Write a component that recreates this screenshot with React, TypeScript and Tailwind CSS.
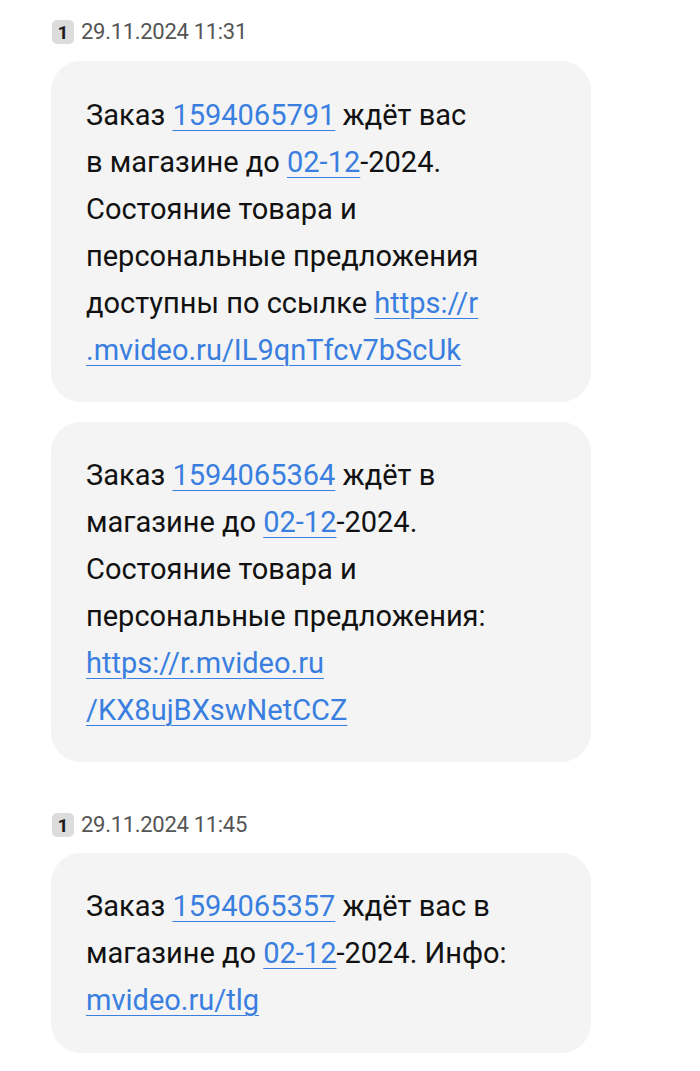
const link = "text-[#3a7fe0] underline decoration-1 underline-offset-[5px]";

function Stamp({ time }: { time: string }) {
  return (
    <div className="flex items-center h-[30px] pl-[52px] gap-[7px]">
      <div className="shrink-0 w-[22px] h-[24px] rounded-[5px] bg-[#dcdcdc] text-[#1a1a1a] text-[19px] font-bold flex items-center justify-center leading-none">
        1
      </div>
      <span className="text-[22px] text-[#555] leading-none tracking-[-0.3px]">{time}</span>
    </div>
  );
}

function L({ children }: { children: React.ReactNode }) {
  return <div className="h-[47px] leading-[47px] whitespace-nowrap">{children}</div>;
}

function Bubble({ children, className }: { children: React.ReactNode; className: string }) {
  return (
    <div className={`ml-[51px] w-[540px] rounded-[30px] bg-[#f4f4f4] pl-[35px] text-[29px] text-[#111] ${className}`}>
      {children}
    </div>
  );
}

export default function App() {
  return (
    <div className="w-[700px] h-[1071px] bg-white pt-[17px] overflow-hidden" style={{ fontFamily: "Roboto, 'Noto Sans', sans-serif" }}>
      <Stamp time="29.11.2024 11:31" />
      <Bubble className="mt-[14px] pt-[31px] pb-[28px]">
        <L>
          Заказ <span className={link}>1594065791</span> ждёт вас
        </L>
        <L>
          в магазине до <span className={link}>02-12</span>-2024.
        </L>
        <L>Состояние товара и</L>
        <L>персональные предложения</L>
        <L>
          доступны по ссылке <span className={link}>https://r</span>
        </L>
        <L>
          <span className={link}>.mvideo.ru/IL9qnTfcv7bScUk</span>
        </L>
      </Bubble>
      <Bubble className="mt-[20px] pt-[30px] pb-[28px]">
        <L>
          Заказ <span className={link}>1594065364</span> ждёт в
        </L>
        <L>
          магазине до <span className={link}>02-12</span>-2024.
        </L>
        <L>Состояние товара и</L>
        <L>персональные предложения:</L>
        <L>
          <span className={link}>https://r.mvideo.ru</span>
        </L>
        <L>
          <span className={link}>/KX8ujBXswNetCCZ</span>
        </L>
      </Bubble>
      <div className="mt-[48px]">
        <Stamp time="29.11.2024 11:45" />
      </div>
      <Bubble className="mt-[13px] pt-[30px] pb-[29px]">
        <L>
          Заказ <span className={link}>1594065357</span> ждёт вас в
        </L>
        <L>
          магазине до <span className={link}>02-12</span>-2024. Инфо:
        </L>
        <L>
          <span className={link}>mvideo.ru/tlg</span>
        </L>
      </Bubble>
    </div>
  );
}
